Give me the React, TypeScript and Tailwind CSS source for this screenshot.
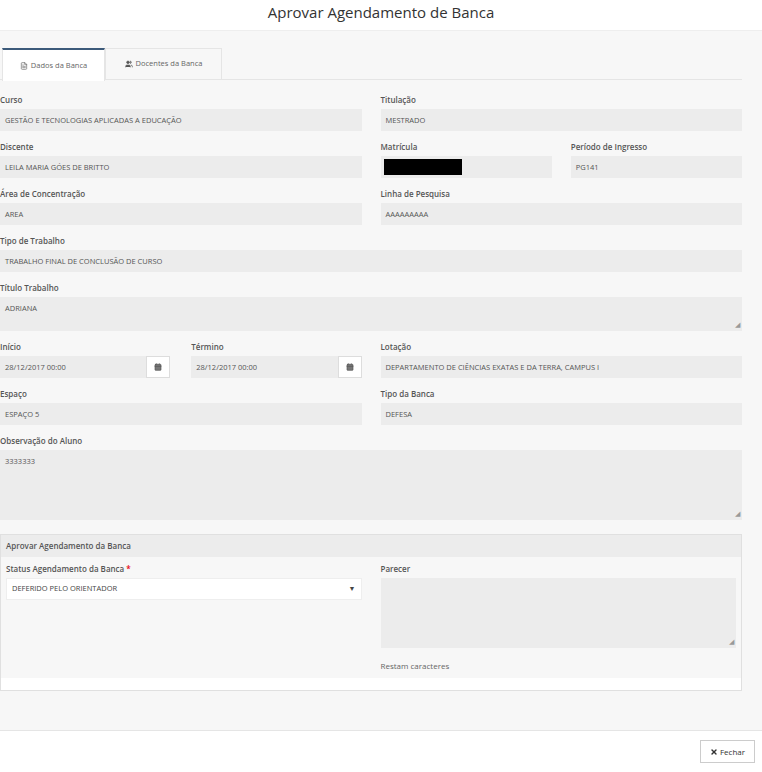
import { FileText, Users, Calendar, X } from "lucide-react";

const L = ({ children }: { children: React.ReactNode }) => (
  <div className="text-[8px] font-semibold text-[#555] h-[10px] leading-[10px] mb-[4px]">{children}</div>
);
const F = ({ children, h = "h-[22px]", resize = false }: { children?: React.ReactNode; h?: string; resize?: boolean }) => (
  <div className={`relative bg-[#ececec] ${h} px-[5px] pt-[6px] text-[7.5px] text-[#555] leading-[10px]`}>
    {children}
    {resize && <span className="absolute right-[2px] bottom-[1px] text-[7px] text-[#999]">◢</span>}
  </div>
);
const Field = ({ label, children, h, resize }: { label: string; children?: React.ReactNode; h?: string; resize?: boolean }) => (
  <div>
    <L>{label}</L>
    <F h={h} resize={resize}>{children}</F>
  </div>
);
const DateF = ({ label, v }: { label: string; v: string }) => (
  <div>
    <L>{label}</L>
    <div className="flex h-[22px]">
      <div className="flex-1 bg-[#ececec] px-[5px] pt-[6px] text-[7.5px] text-[#555] leading-[10px]">{v}</div>
      <div className="w-[24px] bg-white border border-[#ddd] flex items-center justify-center">
        <Calendar size={8} className="text-[#555]" fill="#777" />
      </div>
    </div>
  </div>
);

export default function App() {
  return (
    <div className="w-[762px] h-[772px] bg-white flex flex-col" style={{ fontFamily: "'Open Sans', 'Liberation Sans', sans-serif" }}>
      <div className="h-[31px] flex justify-center pt-[1px] text-[15px] text-[#333] border-b border-[#eee]">
        Aprovar Agendamento de Banca
      </div>
      <div className="flex-1 bg-[#f7f7f7] pl-0 pr-[20px] pt-[17px]">
        <div className="flex h-[32px] border-b border-[#e5e5e5]">
          <div className="ml-[2px] w-[103px] bg-white border-t-2 border-[#3c5a7a] border-x border-x-[#e5e5e5] flex items-center justify-center gap-[3px] text-[7.5px] text-[#666] h-[33px]">
            <FileText size={8} /> Dados da Banca
          </div>
          <div className="w-[117px] border border-[#e5e5e5] flex items-center justify-center gap-[3px] text-[7.5px] text-[#666] border-b-0">
            <Users size={8} fill="#555" /> Docentes da Banca
          </div>
        </div>
        <div className="mt-[15px] flex flex-col gap-[11px]">
          <div className="grid grid-cols-2 gap-x-[19px]">
            <Field label="Curso">GESTÃO E TECNOLOGIAS APLICADAS A EDUCAÇÃO</Field>
            <Field label="Titulação">MESTRADO</Field>
          </div>
          <div className="grid grid-cols-2 gap-x-[19px]">
            <Field label="Discente">LEILA MARIA GÓES DE BRITTO</Field>
            <div className="grid grid-cols-2 gap-x-[19px]">
              <div>
                <L>Matrícula</L>
                <div className="bg-[#ececec] h-[22px] pt-[3px] px-[3px]"><div className="bg-black h-[16px] w-[78px]" /></div>
              </div>
              <Field label="Período de Ingresso">PG141</Field>
            </div>
          </div>
          <div className="grid grid-cols-2 gap-x-[19px]">
            <Field label="Área de Concentração">AREA</Field>
            <Field label="Linha de Pesquisa">AAAAAAAAA</Field>
          </div>
          <Field label="Tipo de Trabalho">TRABALHO FINAL DE CONCLUSÃO DE CURSO</Field>
          <Field label="Título Trabalho" h="h-[34px]" resize>ADRIANA</Field>
          <div className="grid grid-cols-2 gap-x-[19px]">
            <div className="grid grid-cols-2 gap-x-[21px]">
              <DateF label="Início" v="28/12/2017 00:00" />
              <DateF label="Término" v="28/12/2017 00:00" />
            </div>
            <Field label="Lotação">DEPARTAMENTO DE CIÊNCIAS EXATAS E DA TERRA, CAMPUS I</Field>
          </div>
          <div className="grid grid-cols-2 gap-x-[19px]">
            <Field label="Espaço">ESPAÇO 5</Field>
            <Field label="Tipo da Banca">DEFESA</Field>
          </div>
          <Field label="Observação do Aluno" h="h-[70px]" resize>3333333</Field>
          <div className="mt-[3px] border border-[#e0e0e0] bg-white">
            <div className="h-[22px] bg-[#ececec] px-[5px] pt-[6px] text-[8px] font-semibold text-[#555] leading-[10px]">Aprovar Agendamento da Banca</div>
            <div className="bg-[#f7f7f7] grid grid-cols-2 gap-x-[19px] px-[5px] pt-[7px] pb-[6px]">
              <div>
                <L>Status Agendamento da Banca <span className="text-red-600">*</span></L>
                <div className="h-[22px] bg-white border border-[#eee] flex items-center justify-between px-[5px] text-[7.5px] text-[#444]">
                  DEFERIDO PELO ORIENTADOR <span className="text-[7px]">▼</span>
                </div>
              </div>
              <div>
                <L>Parecer</L>
                <F h="h-[70px]" resize />
                <div className="mt-[12px] text-[8px] text-[#666]">Restam caracteres</div>
              </div>
            </div>
            <div className="h-[12px]" />
          </div>
        </div>
      </div>
      <div className="h-[42px] border-t border-[#e5e5e5] flex justify-end items-start pt-[9px] pr-[7px]">
        <div className="h-[23px] w-[55px] border border-[#ccc] bg-white flex items-center justify-center gap-[2px] text-[8px] text-[#333]">
          <X size={8} strokeWidth={4} /> Fechar
        </div>
      </div>
    </div>
  );
}
